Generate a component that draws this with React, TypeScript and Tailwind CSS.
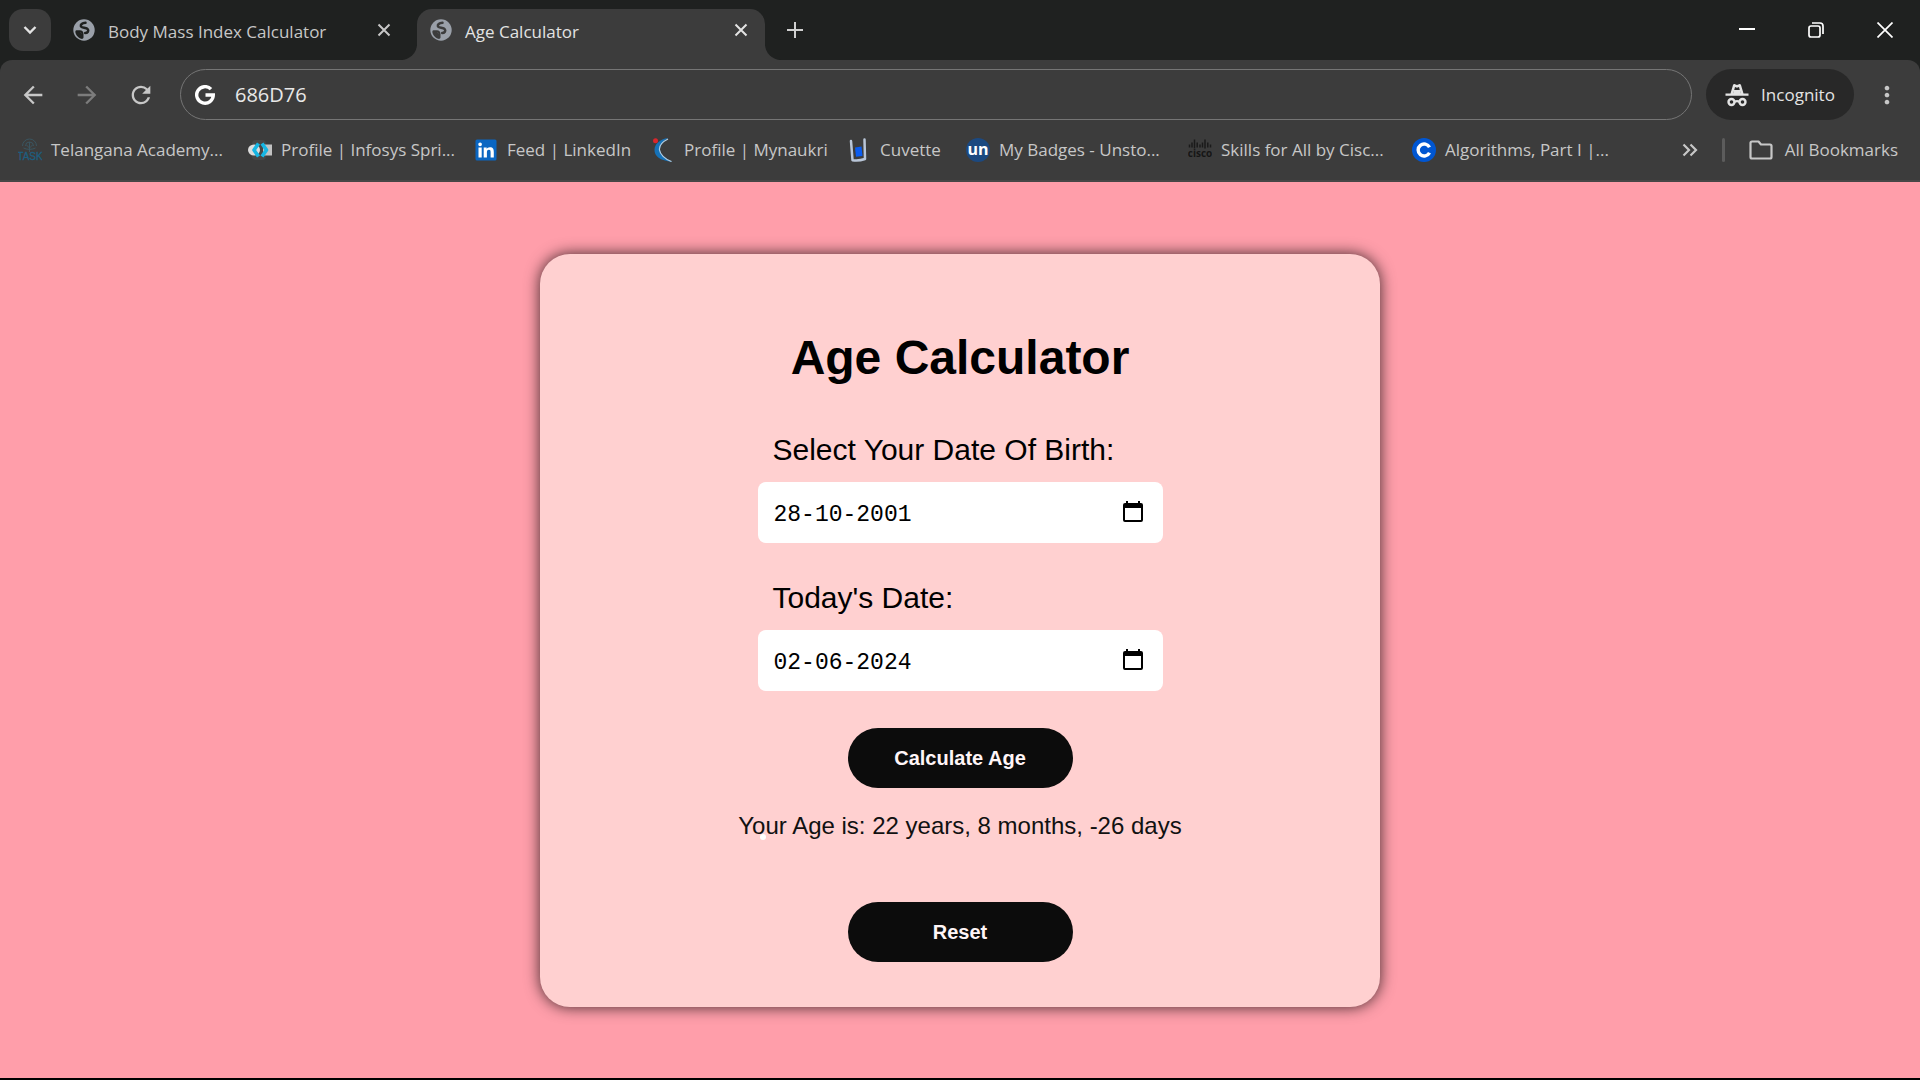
import { useState } from "react";
import type { ReactNode } from "react";
import { MdArrowBack, MdArrowForward, MdRefresh, MdMoreVert } from "react-icons/md";

function Globe({ sea }: { sea: string }) {
  return (
    <svg viewBox="0 0 22 22" className="size-[22px] shrink-0" aria-hidden="true">
      <circle cx="11" cy="11" r="10.7" fill="#9aa0a9" />
      <g fill="none" stroke={sea} strokeLinecap="round" strokeLinejoin="round">
        <path d="M12.500 3.800c-3.600.2-5 1.800-4.600 3.400.5 2 5.600 1.200 7 3.200 1 1.800-.4 3.600-2.700 3.600" strokeWidth="2.500" />
        <path d="M3.500 12.200h3.300c1.700 0 2.700 1.300 2.700 2.800v3.500" strokeWidth="2" />
      </g>
      <path d="M2.300 12.500h4.500l2.700 3v4.600c-3.700-.5-6.900-3.600-7.200-7.600z" fill={sea} />
    </svg>
  );
}

function CloseMark() {
  return (
    <svg viewBox="0 0 14 14" className="size-[14px]" fill="none" stroke="currentColor" strokeWidth="2" aria-hidden="true">
      <path d="M1.500 1.500l11 11M12.500 1.500l-11 11" />
    </svg>
  );
}

function TaskIcon() {
  return (
    <svg viewBox="0 0 24 24" className="size-6" fill="none" aria-hidden="true">
      <path d="M4.500 8a7 7 0 1 1 14 0M7.500 8a4 4 0 0 1 8 0M11.500 4v10M8.500 7l3 3 3-3M5.500 10c3 1.800 9 1.800 12 0" stroke="#3a5560" strokeWidth="1" />
      <text x="12" y="22" textAnchor="middle" fontSize="10" fontFamily="Liberation Sans" fill="#1d5f80" stroke="#1d5f80" strokeWidth=".3">TASK</text>
    </svg>
  );
}

function InfosysIcon() {
  return (
    <svg viewBox="0 0 24 24" className="size-6" aria-hidden="true">
      <rect x="4" y="2" width="14" height="20" rx="4" fill="#474747" />
      <path d="M15 6.500h9v11h-9z" fill="#c2c2c2" />
      <ellipse cx="6" cy="12" rx="6" ry="5.500" fill="#dcdcdc" />
      <path d="M10.500 5.500L6 12l4.500 6.500M14 5.500l4.500 6.500-4.500 6.500" fill="none" stroke="#16b6e4" strokeWidth="3.600" strokeLinejoin="round" />
    </svg>
  );
}

function LinkedInIcon() {
  return (
    <svg viewBox="0 0 24 24" className="size-6" aria-hidden="true">
      <rect x="1.500" y="1.500" width="21" height="21" rx="1.500" fill="#0a66c2" />
      <path
        fill="#fff"
        d="M4.500 9.500h3.200v10H4.500zM6.100 4.500a1.800 1.800 0 1 1 0 3.700 1.800 1.800 0 0 1 0-3.700zM9.700 9.500h3v1.400c.5-.9 1.600-1.700 3.200-1.700 3.200 0 3.900 2 3.900 4.700v5.600h-3.200v-5c0-1.300 0-2.700-1.700-2.700s-2 1.300-2 2.600v5.100H9.700z"
      />
    </svg>
  );
}

function NaukriIcon() {
  return (
    <svg viewBox="0 0 24 24" className="size-6" aria-hidden="true">
      <path d="M17 0C9 1 3.500 6 3.500 12s5 10.500 18 12C14 20.500 9.500 16.500 9 12c-.4-4 3-9 8-12z" fill="#1672b8" />
      <path d="M17 1C11 4 8 8 8.500 12s5 9 12 11.500" fill="none" stroke="#b4cde0" strokeWidth="1.200" />
      <circle cx="4.500" cy="2.800" r="2.500" fill="#d9262c" />
    </svg>
  );
}

function CuvetteIcon() {
  return (
    <svg viewBox="0 0 24 24" className="size-6" aria-hidden="true">
      <path d="M4 3l1.500 19.200c4 .6 8 .3 12.500-1.200L17.500 1.500" fill="none" stroke="#b9c6d8" strokeWidth="2.500" strokeLinecap="round" strokeLinejoin="round" />
      <path d="M8 9.500l6.500-1 1 9.500-6.500.8z" fill="#0a5cf0" />
    </svg>
  );
}

function UnstopIcon() {
  return (
    <svg viewBox="0 0 24 24" className="size-6" aria-hidden="true">
      <circle cx="12" cy="12" r="12" fill="#1c4980" />
      <text x="12" y="17" textAnchor="middle" fontSize="16" fontWeight="700" fontFamily="Open Sans" fill="#fff">un</text>
    </svg>
  );
}

const ciscoBars = [
  [1.5, 6.5, 3], [4, 4.5, 5], [6.5, 1.5, 9], [9.2, 4.5, 5], [12, 6.5, 3],
  [14.5, 4.5, 5], [17, 1.5, 9], [19.8, 4.5, 5], [22.5, 6.5, 3],
];

function CiscoIcon() {
  return (
    <svg viewBox="0 0 24 24" className="size-6" aria-hidden="true">
      {ciscoBars.map(([x, y, h]) => (
        <path key={x} d={`M${x} ${y}v${h}`} stroke="#1a1a1a" strokeWidth="1.500" />
      ))}
      <text x="12" y="18.500" textAnchor="middle" fontSize="10" fontWeight="700" fontFamily="Open Sans" fill="#161616">cisco</text>
    </svg>
  );
}

function CourseraIcon() {
  return (
    <svg viewBox="0 0 24 24" className="size-6" aria-hidden="true">
      <circle cx="12" cy="12" r="12" fill="#0056d2" />
      <path d="M17.500 9.300a6 6 0 1 0 0 5.400" fill="none" stroke="#fff" strokeWidth="3.400" />
    </svg>
  );
}

function GoogleG() {
  return (
    <svg viewBox="0 0 20 20" className="size-5 shrink-0" aria-hidden="true">
      <path d="M16 4.200A8.300 8.300 0 1 0 18.300 10H10.500" fill="none" stroke="#fff" strokeWidth="3.400" />
    </svg>
  );
}

function IncognitoIcon() {
  return (
    <svg viewBox="0 0 24 24" className="size-6" aria-hidden="true">
      <path
        fillRule="evenodd"
        d="M5.500 10.500L8 2c.3-.9 1.200-1.200 2-.8l2 .8 2-.8c.8-.4 1.700-.1 2 .8l2.500 8.500h5v2.200H.5v-2.200zM8.300 10.500h7.400L14 4l-2 .8L10 4z"
        fill="#e3e3e3"
      />
      <path d="M9 7h6l1 4H8z" fill="#e3e3e3" />
      <g fill="none" stroke="#e3e3e3" strokeWidth="2.400">
        <circle cx="6.500" cy="19" r="3" />
        <circle cx="17.500" cy="19" r="3" />
        <path d="M9.500 18.800c1.500-.8 3.500-.8 5 0" />
      </g>
    </svg>
  );
}

const bookmarks: { label: string; icon: ReactNode; width: string }[] = [
  { label: "Telangana Academy...", icon: <TaskIcon />, width: "w-[230px]" },
  { label: "Profile | Infosys Spri...", icon: <InfosysIcon />, width: "w-[226px]" },
  { label: "Feed | LinkedIn", icon: <LinkedInIcon />, width: "w-[177px]" },
  { label: "Profile | Mynaukri", icon: <NaukriIcon />, width: "w-[196px]" },
  { label: "Cuvette", icon: <CuvetteIcon />, width: "w-[119px]" },
  { label: "My Badges - Unsto...", icon: <UnstopIcon />, width: "w-[222px]" },
  { label: "Skills for All by Cisc...", icon: <CiscoIcon />, width: "w-[224px]" },
  { label: "Algorithms, Part I |...", icon: <CourseraIcon />, width: "w-[200px]" },
];

function TabStrip() {
  return (
    <div className="flex h-[60px] items-end bg-[#1f2120]">
      <button aria-label="Search tabs" className="mb-[9px] ml-[9px] flex size-[42px] items-center justify-center rounded-[14px] bg-[#3c3c3c] text-[#e3e3e3]">
        <svg viewBox="0 0 14 10" className="h-[10px] w-[14px]" fill="none" stroke="currentColor" strokeWidth="2.400" aria-hidden="true">
          <path d="M1.500 2l5.500 5.500L12.500 2" />
        </svg>
      </button>
      <div className="ml-[22px] flex h-[51px] w-[320px] items-center pb-[9px] pr-[2px] text-[#c7c7c7]">
        <Globe sea="#1f2120" />
        <span className="ml-[13px] flex-1 whitespace-nowrap pt-1">Body Mass Index Calculator</span>
        <button aria-label="Close Body Mass Index Calculator"><CloseMark /></button>
      </div>
      <div className="ml-1 size-5 rounded-br-[16px] bg-[#1f2120] shadow-[6px_6px_0_#3c3c3c] [clip-path:inset(0)]" />
      <div className="flex h-[51px] w-[348px] items-center rounded-t-[15px] bg-[#3c3c3c] pb-[9px] pr-[17px] pl-[13px] text-[#e3e3e3]">
        <Globe sea="#3c3c3c" />
        <span className="ml-[13px] flex-1 whitespace-nowrap pt-1">Age Calculator</span>
        <button aria-label="Close Age Calculator"><CloseMark /></button>
      </div>
      <div className="size-5 rounded-bl-[16px] bg-[#1f2120] shadow-[-6px_6px_0_#3c3c3c] [clip-path:inset(0)]" />
      <button aria-label="New tab" className="mb-5 text-[#d0d0d0]">
        <svg viewBox="0 0 20 20" className="size-5" stroke="currentColor" strokeWidth="2" aria-hidden="true">
          <path d="M10 2v16M2 10h16" />
        </svg>
      </button>
      <div className="mb-[22px] ml-auto flex items-center gap-[53px] pr-[27px] text-white">
        <button aria-label="Minimize">
          <svg viewBox="0 0 16 16" className="size-4" stroke="currentColor" strokeWidth="2" aria-hidden="true"><path d="M0 7h16" /></svg>
        </button>
        <button aria-label="Restore">
          <svg viewBox="0 0 16 16" className="size-4" fill="none" stroke="currentColor" strokeWidth="1.700" aria-hidden="true">
            <rect x="1" y="4" width="11" height="11" rx="2" />
            <path d="M4 1h8a3 3 0 0 1 3 3v8" />
          </svg>
        </button>
        <button aria-label="Close window">
          <svg viewBox="0 0 16 16" className="size-4" stroke="currentColor" strokeWidth="1.700" aria-hidden="true"><path d="M.5.5l15 15M15.500.5l-15 15" /></svg>
        </button>
      </div>
    </div>
  );
}

function Toolbar() {
  return (
    <div className="flex h-[69px] items-center">
      <div className="flex w-[180px] shrink-0 items-center gap-[26px] pl-[19px] text-[#c7c7c7]">
        <button aria-label="Back"><MdArrowBack className="size-7" /></button>
        <button aria-label="Forward" className="text-[#7c7c7c]"><MdArrowForward className="size-7" /></button>
        <button aria-label="Reload"><MdRefresh className="size-7" /></button>
      </div>
      <div className="flex h-[51px] flex-1 items-center gap-5 rounded-full border border-[#757575] pl-[14px]">
        <GoogleG />
        <input aria-label="Address" defaultValue="686D76" className="min-w-0 flex-1 bg-transparent text-[20px] leading-6 text-[#e8e8e8] outline-none" />
      </div>
      <button className="ml-[14px] flex h-[51px] w-[148px] items-center justify-center gap-3 rounded-full bg-[#282828] text-[#e3e3e3]">
        <IncognitoIcon />
        Incognito
      </button>
      <button aria-label="Menu" className="mx-[19px] text-[#c7c7c7]"><MdMoreVert className="size-7" /></button>
    </div>
  );
}

function BookmarksBar() {
  return (
    <nav aria-label="Bookmarks" className="flex h-[51px] items-center pb-[9px] pl-[18px]">
      {bookmarks.map((b) => (
        <a key={b.label} href="#" className={`flex shrink-0 items-center gap-[9px] whitespace-nowrap ${b.width}`}>
          {b.icon}
          {b.label}
        </a>
      ))}
      <div className="ml-auto flex items-center pr-[22px]">
        <button aria-label="More bookmarks">
          <svg viewBox="0 0 16 14" className="h-[14px] w-4" fill="none" stroke="currentColor" strokeWidth="2.200" aria-hidden="true">
            <path d="M1.500 1.500L7 7l-5.500 5.500M8.500 1.500L14 7l-5.500 5.500" />
          </svg>
        </button>
        <div className="mx-6 h-6 w-[3px] rounded bg-[#5c5c5c]" />
        <button className="flex items-center gap-3">
          <svg viewBox="0 0 24 20" className="h-5 w-6" fill="none" stroke="currentColor" strokeWidth="2.200" strokeLinejoin="round" aria-hidden="true">
            <path d="M1.500 17V3q0-1.500 1.500-1.500h6.500L12 4.500h9q1.500 0 1.500 1.500v11q0 1.500-1.500 1.500H3q-1.500 0-1.500-1.500z" />
          </svg>
          All Bookmarks
        </button>
      </div>
    </nav>
  );
}

function DateField({ id, label, value, onChange }: { id: string; label: string; value: string; onChange: (v: string) => void }) {
  return (
    <div className="w-[405px] max-w-full">
      <label htmlFor={id} className="block pl-[15px] text-[30px] leading-9">{label}</label>
      <div className="mt-[14px] flex h-[61px] items-center rounded-lg bg-white pl-4 pr-[18px]">
        <input id={id} value={value} onChange={(e) => onChange(e.target.value)} className="min-w-0 flex-1 bg-transparent pt-[6px] font-['Liberation_Mono',monospace] text-[23px] leading-8 outline-none" />
        <button aria-label={`Pick ${label}`}>
          <svg viewBox="0 0 24 24" className="size-6" aria-hidden="true">
            <path fillRule="evenodd" d="M5 1h2v2h10V1h2v2h1q2 0 2 2v15q0 2-2 2H4q-2 0-2-2V5q0-2 2-2h1zM4 8v12h16V8z" />
          </svg>
        </button>
      </div>
    </div>
  );
}

export default function App() {
  const [birth, setBirth] = useState("28-10-2001");
  const [today, setToday] = useState("02-06-2024");
  return (
    <div className="flex min-h-screen flex-col border-b-2 border-black bg-[#ff9eaa]">
      <header className="bg-[#1f2120] font-['Open_Sans',sans-serif] text-[17px] leading-6 text-[#c7c7c7]">
        <TabStrip />
        <div className="rounded-t-[12px] border-b-2 border-[#474747] bg-[#3c3c3c]">
          <Toolbar />
          <BookmarksBar />
        </div>
      </header>
      <main className="flex flex-1 items-center justify-center font-['Liberation_Sans',Arial,sans-serif] text-black">
        <section className="flex w-[840px] flex-col items-center rounded-[30px] bg-[#ffd0d0] pb-[45px] pt-[76px] shadow-[0_0_15px_#000000c0]">
          <h1 className="text-[48px] font-bold leading-[56px]">Age Calculator</h1>
          <div className="mt-[46px] flex flex-col gap-[37px]">
            <DateField id="birth" label="Select Your Date Of Birth:" value={birth} onChange={setBirth} />
            <DateField id="today" label="Today's Date:" value={today} onChange={setToday} />
          </div>
          <button className="mt-[37px] h-[60px] w-[225px] rounded-full bg-[#0c0c0c] text-[20px] font-bold text-[#fff5f7]">Calculate Age</button>
          <div className="relative mt-6">
            <p className="text-[24px] leading-7 text-[#111]">Your Age is: 22 years, 8 months, -26 days</p>
            <span className="absolute left-[22px] top-[22px] size-[6px] rounded-full bg-white" />
          </div>
          <button className="mt-[62px] h-[60px] w-[225px] rounded-full bg-[#0c0c0c] text-[20px] font-bold text-[#fff5f7]">Reset</button>
        </section>
      </main>
    </div>
  );
}
